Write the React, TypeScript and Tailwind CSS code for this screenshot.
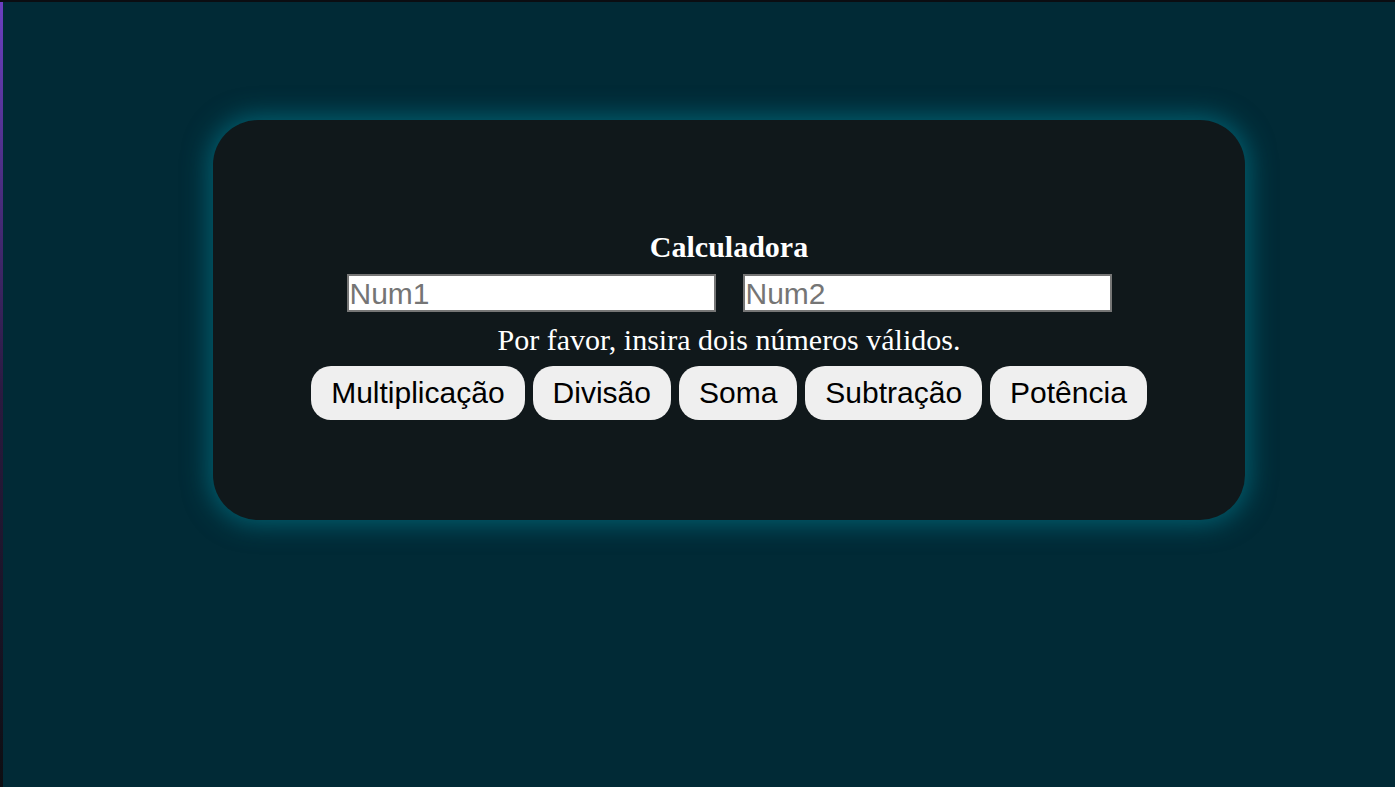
export default function App() {
  const ops = ["Multiplicação", "Divisão", "Soma", "Subtração", "Potência"];

  return (
    <div className="flex h-[787px] w-full flex-col bg-[#0b0d12]">
      <div className="h-[2px] shrink-0 bg-[#0b0d12]" />
      <div className="flex flex-1">
        <div className="w-[3px] shrink-0 bg-gradient-to-b from-[#6b3fc0] via-[#2a1a40] to-[#0d0e12]" />
        <main className="flex-1 bg-[#012a36] pl-[210px] pt-[118px]">
          <div className="flex h-[400px] w-[1032px] flex-col items-center justify-center rounded-[45px] bg-[#10181b] pt-[10px] shadow-[0_0_26px_4px_rgba(0,140,160,0.55)]">
            <h1 className="font-['Liberation_Serif',serif] text-[30px] font-bold leading-[34px] text-white">
              Calculadora
            </h1>
            <div className="mt-[10px] flex gap-[27px]">
              <input
                type="text"
                placeholder="Num1"
                className="h-[38px] w-[369px] border-2 border-[#767676] bg-white px-[1px] font-['Liberation_Sans',sans-serif] text-[30px] text-black outline-none placeholder:text-[#757575]"
              />
              <input
                type="text"
                placeholder="Num2"
                className="h-[38px] w-[369px] border-2 border-[#767676] bg-white px-[1px] font-['Liberation_Sans',sans-serif] text-[30px] text-black outline-none placeholder:text-[#757575]"
              />
            </div>
            <p className="mt-[10px] font-['Liberation_Serif',serif] text-[30px] leading-[35px] text-white">
              Por favor, insira dois números válidos.
            </p>
            <div className="mt-[9px] flex gap-[8px]">
              {ops.map((op) => (
                <button
                  key={op}
                  type="button"
                  className="h-[54px] rounded-[20px] bg-[#efefef] px-[20px] font-['Liberation_Sans',sans-serif] text-[30px] leading-[34px] text-black"
                >
                  {op}
                </button>
              ))}
            </div>
          </div>
        </main>
      </div>
    </div>
  );
}
